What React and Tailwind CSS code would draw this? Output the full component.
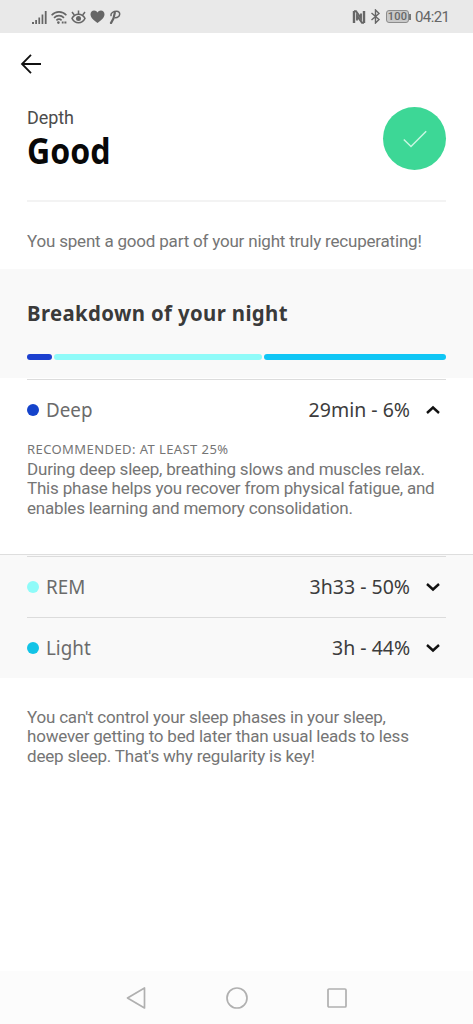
import { useState } from 'react';

const phases = [
  { name: 'Deep', value: '29min - 6%', dot: 'bg-[#1443cb]' },
  { name: 'REM', value: '3h33 - 50%', dot: 'bg-[#8ffbf9]' },
  { name: 'Light', value: '3h - 44%', dot: 'bg-[#12c3e6]' },
];

const StatusBar = () => (
  <div className="h-[33px] bg-[#e9e9e9] flex items-center justify-between pl-8 pr-[25px] text-[#666]">
    <div className="flex items-center">
      {/* signal */}
      <svg width="15" height="14" viewBox="0 0 15 14" fill="currentColor">
        <path d="M0 12h2v2H0zM3.2 10h1.8v4H3.2zM6.4 7.4h1.7V14H6.4zM9.6 4.4h1.7V14H9.6zM12.8 1h1.8v13h-1.8z" />
      </svg>
      {/* wifi */}
      <svg className="ml-1" width="16" height="14" viewBox="0 0 16 14" fill="none" stroke="currentColor" strokeWidth="1.6">
        <path d="M.6 5.2C4.8 .8 11.2 .8 15.4 5.2M3 7.9c3-3 7-3 10 0M5.4 10.3c1.6-1.5 3.6-1.5 5.2 0" />
        <circle cx="7.4" cy="12.6" r="1.3" fill="currentColor" stroke="none" />
        <path d="M10.8 12.6h1.8M13.4 12.6h2" strokeWidth="2" />
      </svg>
      {/* eye */}
      <svg className="ml-1" width="15" height="14" viewBox="0 0 15 14" fill="none" stroke="currentColor" strokeWidth="1.5">
        <path d="M1 8.4C2.6 5.2 4.8 4.2 7.5 4.2S12.4 5.2 14 8.4c-1.6 3.2-3.8 4.3-6.5 4.3S2.6 11.6 1 8.4z" />
        <path d="M7.5 4V.6M3.3 5L1 2M11.7 5L14 2" />
        <circle cx="7.5" cy="8.4" r="2.5" fill="currentColor" stroke="none" />
      </svg>
      <svg className="ml-1" width="15" height="13" viewBox="0 0 15 13" fill="currentColor">
        <path d="M7.5 13C4 10.5 .5 7.8 .5 4.3.5 2 2.2.5 4.1.5c1.5 0 2.7.8 3.4 2C8.2 1.3 9.4.5 10.9.5c1.9 0 3.6 1.5 3.6 3.8 0 3.5-3.5 6.2-7 8.7z" />
      </svg>
      {/* script P */}
      <svg className="ml-1" width="12" height="14" viewBox="0 0 12 14" fill="none" stroke="currentColor" strokeLinecap="round">
        <path d="M5.8 2.8C5.4 6 4.2 10 2 13" strokeWidth="2.2" />
        <path d="M2 5.6C1.4 3.2 4.4 1.2 7.6 1.2c4.6 0 4 6-1.4 6.6" strokeWidth="1.5" />
      </svg>
    </div>
    <div className="flex items-center">
      {/* nfc */}
      <svg width="14" height="14" viewBox="0 0 14 14" fill="none" stroke="currentColor">
        <path d="M2 1v12M12 1v12" strokeWidth="2.4" />
        <path d="M2 1.2h2L9 8V3.5M12 12.800h-2L5 6v4.500" strokeWidth="1.9" />
      </svg>
      <svg className="ml-1" width="11" height="15" viewBox="0 0 11 15" fill="none" stroke="currentColor" strokeWidth="1.4">
        <path d="M1.500 4l7.500 6.500-3.500 3.500V1L9 4.500 1.500 11" />
      </svg>
      <div className="ml-[5px] w-[23px] h-[13px] rounded-[3px] border border-[#8c8c8c] bg-[#c9c9c9] flex items-center justify-center font-['Roboto',sans-serif] text-[11px] leading-none font-medium tracking-[0.3px]">
        100
      </div>
      <div className="w-[2px] h-1.5 bg-[#777]" />
      <span className="ml-[4px] mt-[2px] font-['Roboto',sans-serif] text-[15px] leading-none tracking-[-0.6px] w-[33px] whitespace-nowrap">04:21</span>
    </div>
  </div>
);

const Chevron = ({ up }) => (
  <svg className={up ? 'rotate-180' : ''} width="14" height="10" viewBox="0 0 14 10" fill="none" stroke="#111" strokeWidth="2.4">
    <path d="M1 2l6 5.500L13 2" />
  </svg>
);

const PhaseRow = ({ phase, open, onToggle }) => (
  <button onClick={onToggle} className="w-full h-[61px] pb-px flex items-center border-t border-[#dcdcdc] font-['Noto_Sans',sans-serif]">
    <span className={`w-3 h-3 rounded-full ${phase.dot}`} />
    <span className="ml-[7px] text-[20px] text-[#6b6b6b] origin-left scale-x-[0.940]">{phase.name}</span>
    <span className="ml-auto mr-4 text-[20px] text-[#3c3c3c] origin-right scale-x-[0.975]">{phase.value}</span>
    <span className="mr-1.5"><Chevron up={open} /></span>
  </button>
);

const App = () => {
  const [open, setOpen] = useState('Deep');
  const toggle = (name) => setOpen(open === name ? '' : name);

  return (
    <div className="w-[473px] h-[1024px] bg-white flex flex-col overflow-hidden font-['Roboto',sans-serif] text-[#757575]">
      <StatusBar />

      <div className="h-[62px] pl-[20px] flex items-center">
        <svg width="21" height="20" viewBox="0 0 21 20" fill="none" stroke="#111" strokeWidth="1.8">
          <path d="M21 10H2M11 .8L2 10l9 9.200" />
        </svg>
      </div>

      {/* Score */}
      <div className="mx-[27px] h-[107px] pt-[12px] flex justify-between border-b-2 border-[#f3f3f3]">
        <div>
          <p className="pt-px text-[18px] leading-[20px] text-[#4c4c4c] tracking-[-0.1px]">Depth</p>
          <h1 className="mt-[3px] font-['Noto_Sans',sans-serif] text-[36px] leading-[40px] font-bold text-[#080808] origin-left scale-x-[0.890]">Good</h1>
        </div>
        <div className="w-[63px] h-[63px] rounded-full bg-[#3dd796] flex items-center justify-center">
          <svg width="24" height="18" viewBox="0 0 24 18" fill="none" stroke="#c9f7e2" strokeWidth="1.5">
            <path d="M.8 9.500L8 16.500 23.200 1.200" />
          </svg>
        </div>
      </div>

      <p className="h-[67px] pl-[27px] pt-[29px] text-[17px] leading-[20px] tracking-[-0.2px] whitespace-nowrap">
        You spent a good part of your night truly recuperating!
      </p>

      {/* Breakdown */}
      <div className="h-[109px] px-[27px] pt-[28px] bg-[#f9f9f9]">
        <h2 className="w-max font-['Noto_Sans',sans-serif] text-[22px] leading-[30px] font-bold text-[#3a3a3a] whitespace-nowrap tracking-[0.4px] origin-left scale-x-[0.925]">
          Breakdown of your night
        </h2>
        <div className="mt-[27px] h-1.5 flex gap-0.5">
          <div className="w-[25px] rounded-full bg-[#1c40cf]" />
          <div className="w-[208px] rounded-full bg-[#8ffbf9]" />
          <div className="flex-1 rounded-full bg-[#10c6f5]" />
        </div>
      </div>

      <div className="h-[176px] pt-[1px] px-[27px]">
        <PhaseRow phase={phases[0]} open={open === 'Deep'} onToggle={() => toggle('Deep')} />
        {open === 'Deep' && (
          <>
            <p className="font-['Noto_Sans',sans-serif] text-[13px] leading-[18px] tracking-[0.42px] whitespace-nowrap">
              RECOMMENDED: AT LEAST 25%
            </p>
            <p className="mt-[1.5px] text-[17px] leading-[19.5px] tracking-[-0.2px] whitespace-nowrap">
              During deep sleep, breathing slows and muscles relax.<br />
              This phase helps you recover from physical fatigue, and<br />
              enables learning and memory consolidation.
            </p>
          </>
        )}
      </div>

      <div className="h-[124px] pt-[1px] px-[27px] bg-[#f9f9f9] border-t border-[#dedede]">
        {phases.slice(1).map((phase) => (
          <PhaseRow key={phase.name} phase={phase} open={open === phase.name} onToggle={() => toggle(phase.name)} />
        ))}
      </div>

      <p className="px-[27px] pt-[29.5px] text-[17px] leading-[19.5px] tracking-[-0.2px] whitespace-nowrap">
        You can't control your sleep phases in your sleep,<br />
        however getting to bed later than usual leads to less<br />
        deep sleep. That's why regularity is key!
      </p>

      {/* Android navigation */}
      <div className="mt-auto h-[53px] bg-[#fcfcfc] flex items-center justify-center gap-[78px]">
        <svg width="22" height="22" viewBox="0 0 22 22" fill="none" stroke="#b0b0b0" strokeWidth="1.7" strokeLinejoin="round">
          <path d="M1.500 11L18.500 1v20z" />
        </svg>
        <svg width="22" height="22" viewBox="0 0 22 22" fill="none" stroke="#b0b0b0" strokeWidth="1.7">
          <circle cx="11" cy="11" r="10" />
        </svg>
        <svg width="22" height="22" viewBox="0 0 22 22" fill="none" stroke="#b0b0b0" strokeWidth="1.7">
          <rect x="2" y="2" width="18" height="18" rx="1" />
        </svg>
      </div>
    </div>
  );
};

export default App;
